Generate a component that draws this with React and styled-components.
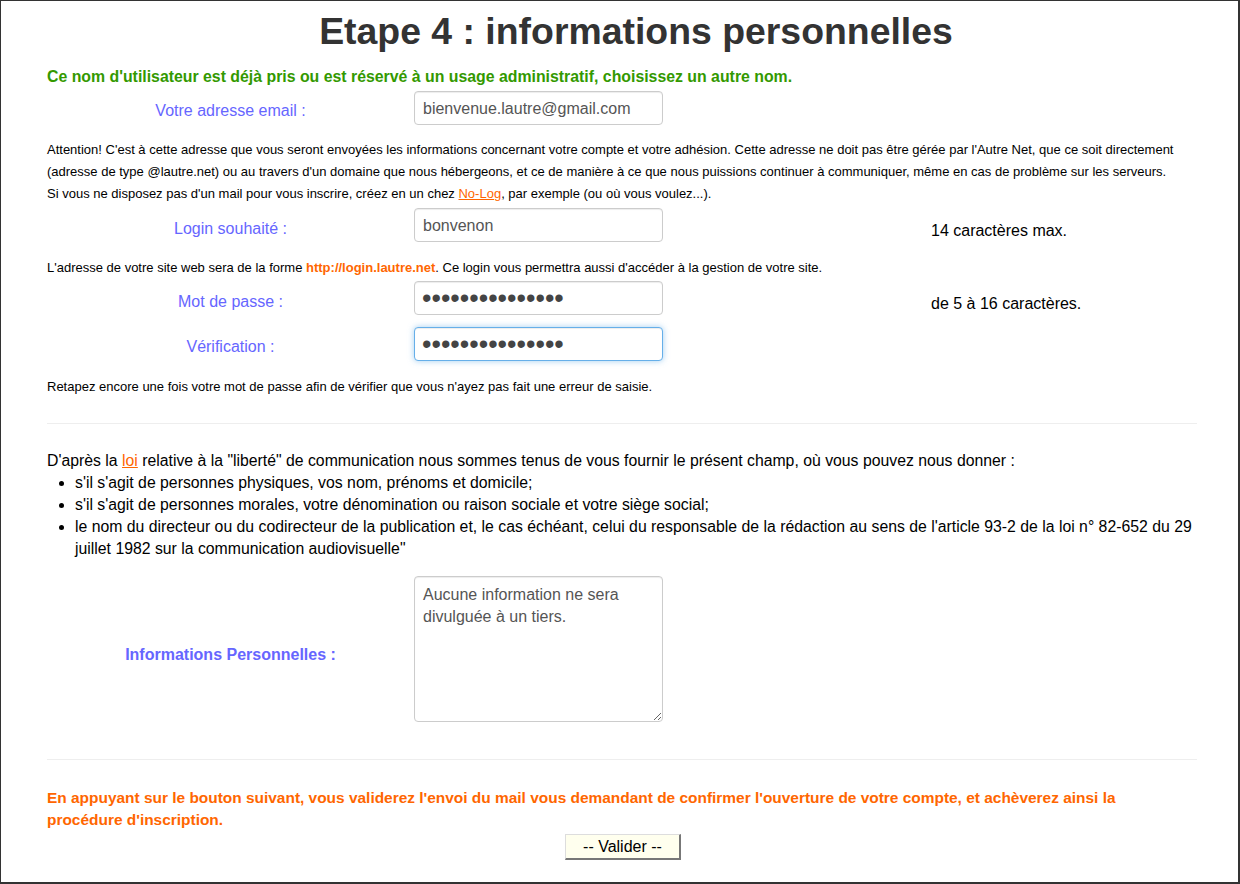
import React from "react"
import { createGlobalStyle, styled } from "styled-components"

const GlobalStyle = createGlobalStyle`
  html, body {
    margin: 0;
    padding: 0;
    background: #333;
  }
  body {
    font-family: "Liberation Sans", Arial, sans-serif;
    color: #000;
  }
`

const ORANGE = "#ff6600"
const LABEL = "#6666ff"

const Page = styled.div`
  margin: 1px 2px 0 1px;
  height: 881px;
  box-sizing: border-box;
  background: #fff;
  padding: 7px 41px 0 46px;
  overflow: hidden;
`

const Title = styled.h1`
  margin: 0;
  padding-left: 28px;
  font-size: 37.4px;
  line-height: 46px;
  font-weight: bold;
  color: #333;
  text-align: center;
`

const Notice = styled.p`
  margin: ${(p) => p.$top}px 0 0;
  font-size: ${(p) => p.$size}px;
  line-height: ${(p) => p.$line}px;
  font-weight: bold;
  color: ${(p) => p.$color};
`

const FieldRow = styled.div`
  display: grid;
  grid-template-columns: 367px 517px 1fr;
  align-items: center;
  margin-top: ${(p) => p.$top}px;
`

const Label = styled.label`
  text-align: center;
  font-size: 16px;
  color: ${LABEL};
  font-weight: ${(p) => (p.$bold ? "bold" : "normal")};
  padding-top: ${(p) => p.$shift || 0}px;
`

const TextInput = styled.input`
  box-sizing: border-box;
  width: 249px;
  height: 34px;
  padding: 1px 8px 0;
  border: 1px solid ${(p) => (p.$focused ? "#66afe9" : "#ccc")};
  border-radius: 4px;
  font-family: "Liberation Sans", Arial, sans-serif;
  font-size: 16px;
  color: #555;
  background: #fff;
  box-shadow: ${(p) =>
    p.$focused
      ? "inset 0 1px 1px rgba(0,0,0,.075), 0 0 6px rgba(102,175,233,.6)"
      : "inset 0 1px 1px rgba(0,0,0,.075)"};
  outline: none;

  &[type="password"] {
    font-size: 27px;
    padding: 0 7px;
    color: #444;
  }
`

const TextArea = styled.textarea`
  box-sizing: border-box;
  width: 249px;
  height: 146px;
  padding: 7px 8px 5px;
  border: 1px solid #ccc;
  border-radius: 4px;
  font-family: "Liberation Sans", Arial, sans-serif;
  font-size: 16px;
  line-height: 22px;
  color: #555;
  box-shadow: inset 0 1px 1px rgba(0,0,0,.075);
  outline: none;
`

const Hint = styled.span`
  font-size: 16px;
  padding-top: ${(p) => p.$shift || 0}px;
`

const Small = styled.p`
  margin: ${(p) => p.$top}px 0 0;
  font-size: 13px;
  line-height: 22px;
`

const Link = styled.a`
  color: ${ORANGE};
  text-decoration: underline;
`

const Strong = styled.b`
  color: ${ORANGE};
`

const Rule = styled.hr`
  margin: ${(p) => p.$top}px 0 0;
  border: 0;
  border-top: 1px solid #eee;
  height: 0;
`

const Text = styled.p`
  margin: 26px 0 0;
  font-size: 15.8px;
  line-height: 22px;
`

const List = styled.ul`
  margin: 0;
  padding-left: 28px;
  font-size: 15.8px;
  line-height: 22px;
`

const Actions = styled.div`
  display: flex;
  justify-content: center;
  margin-top: 3px;
  padding-left: 2px;
`

const Button = styled.button`
  box-sizing: border-box;
  width: 116px;
  height: 26px;
  padding: 0;
  background: #ffffee;
  border-style: solid;
  border-width: 1px 2px 2px 1px;
  border-color: #ddd #777 #777 #ddd;
  font-family: "Liberation Sans", Arial, sans-serif;
  font-size: 16px;
  color: #000;
  cursor: pointer;
`

export default function App() {
  return (
    <>
      <GlobalStyle />
      <Page>
        <Title>Etape 4 : informations personnelles</Title>

        <Notice $color="#339900" $top={13} $size={15.85} $line={20}>
          Ce nom d'utilisateur est déjà pris ou est réservé à un usage administratif, choisissez un autre nom.
        </Notice>

        <FieldRow $top={4}>
          <Label $shift={6}>Votre adresse email :</Label>
          <TextInput type="text" defaultValue="bienvenue.lautre@gmail.com" />
        </FieldRow>

        <Small $top={14}>
          Attention! C'est à cette adresse que vous seront envoyées les informations concernant votre compte et votre
          adhésion. Cette adresse ne doit pas être gérée par l'Autre Net, que ce soit directement
          <br />
          (adresse de type @lautre.net) ou au travers d'un domaine que nous hébergeons, et ce de manière à ce que nous
          puissions continuer à communiquer, même en cas de problème sur les serveurs.
          <br />
          Si vous ne disposez pas d'un mail pour vous inscrire, créez en un chez <Link href="#">No-Log</Link>, par
          exemple (ou où vous voulez...).
        </Small>

        <FieldRow $top={3}>
          <Label $shift={8}>Login souhaité :</Label>
          <TextInput type="text" defaultValue="bonvenon" />
          <Hint $shift={12}>14 caractères max.</Hint>
        </FieldRow>

        <Small $top={15}>
          L'adresse de votre site web sera de la forme <Strong>http://login.lautre.net</Strong>. Ce login vous
          permettra aussi d'accéder à la gestion de votre site.
        </Small>

        <FieldRow $top={2}>
          <Label $shift={8}>Mot de passe :</Label>
          <TextInput type="password" defaultValue="bonvenon1234567" />
          <Hint $shift={12}>de 5 à 16 caractères.</Hint>
        </FieldRow>

        <FieldRow $top={12}>
          <Label $shift={6}>Vérification :</Label>
          <TextInput type="password" defaultValue="bonvenon1234567" $focused autoFocus />
        </FieldRow>

        <Small $top={15}>
          Retapez encore une fois votre mot de passe afin de vérifier que vous n'ayez pas fait une erreur de saisie.
        </Small>

        <Rule $top={25} />

        <Text>
          D'après la <Link href="#">loi</Link> relative à la "liberté" de communication nous sommes tenus de vous
          fournir le présent champ, où vous pouvez nous donner :
        </Text>
        <List>
          <li>s'il s'agit de personnes physiques, vos nom, prénoms et domicile;</li>
          <li>s'il s'agit de personnes morales, votre dénomination ou raison sociale et votre siège social;</li>
          <li>
            le nom du directeur ou du codirecteur de la publication et, le cas échéant, celui du responsable de la
            rédaction au sens de l'article 93-2 de la loi n° 82-652 du 29 juillet 1982 sur la communication
            audiovisuelle"
          </li>
        </List>

        <FieldRow $top={16}>
          <Label $bold $shift={12}>Informations Personnelles :</Label>
          <TextArea defaultValue="Aucune information ne sera divulguée à un tiers." />
        </FieldRow>

        <Rule $top={37} />

        <Notice $color={ORANGE} $top={27} $size={15.45} $line={22}>
          En appuyant sur le bouton suivant, vous validerez l'envoi du mail vous demandant de confirmer l'ouverture de
          votre compte, et achèverez ainsi la
          <br />
          procédure d'inscription.
        </Notice>

        <Actions>
          <Button type="button">-- Valider --</Button>
        </Actions>
      </Page>
    </>
  )
}
